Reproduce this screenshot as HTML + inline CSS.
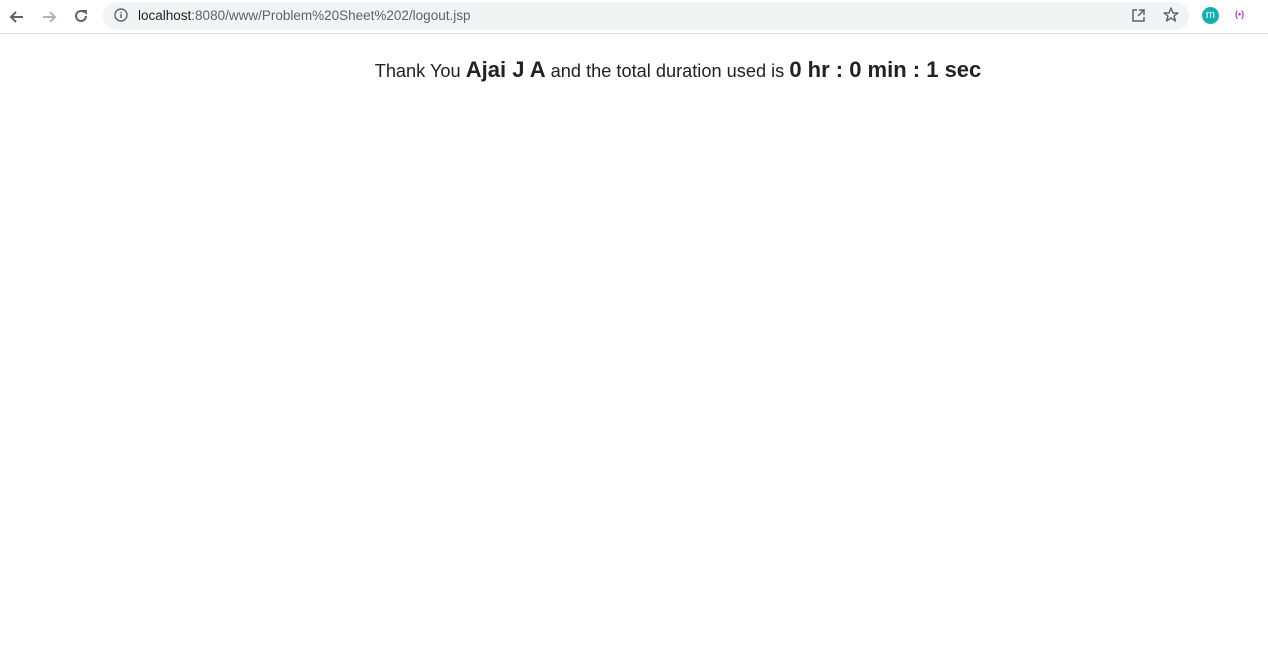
<!DOCTYPE html>
<html><head><style>
body{margin:0;width:1268px;height:668px;background:#fff;font-family:"Liberation Sans",sans-serif;overflow:hidden;position:relative}
.bar{position:absolute;left:0;top:0;width:1268px;height:33px;background:#fff;border-bottom:1px solid #dadce0}
.url{position:absolute;left:103px;top:2px;width:1086px;height:28px;border-radius:14px;background:#f1f3f4}
.urltext{position:absolute;left:138px;top:8px;font-size:13.5px;color:#202124}
.urltext span{color:#5f6368}
.msg{position:absolute;top:57px;left:0;width:1356px;text-align:center;font-size:18.2px;color:#222;white-space:nowrap}
.msg b{font-size:22px}
</style></head><body>
<div class="bar">
<svg style="position:absolute;left:8px;top:8px" width="18" height="18" viewBox="0 0 18 18"><path d="M15 9H3M8 4L3 9l5 5" stroke="#5f6368" stroke-width="2" fill="none"/></svg>
<svg style="position:absolute;left:40px;top:8px" width="18" height="18" viewBox="0 0 18 18"><path d="M3 9h12M10 4l5 5-5 5" stroke="#b0b3b7" stroke-width="2" fill="none"/></svg>
<svg style="position:absolute;left:72px;top:7px" width="18" height="18" viewBox="0 0 18 18"><path d="M14 9a5 5 0 1 1-1.5-3.6" stroke="#5f6368" stroke-width="2" fill="none"/><path d="M10 3h5v5z" fill="#5f6368"/></svg>
<div class="url"></div>
<svg style="position:absolute;left:114px;top:8px" width="14" height="14" viewBox="0 0 14 14"><circle cx="7" cy="7" r="6" stroke="#5f6368" stroke-width="1.4" fill="none"/><path d="M7 6v4M7 4v1" stroke="#5f6368" stroke-width="1.5"/></svg>
<div class="urltext">localhost<span>:8080/www/Problem%20Sheet%202/logout.jsp</span></div>
<svg style="position:absolute;left:1131px;top:8px" width="15" height="15" viewBox="0 0 15 15"><path d="M6 2H2v11h11V9M8 2h5v5M13 2L7 8" stroke="#5f6368" stroke-width="1.5" fill="none"/></svg>
<svg style="position:absolute;left:1162px;top:6px" width="18" height="18" viewBox="0 0 18 18"><path d="M9 2l2 5h5l-4 3 1.5 5L9 12l-4.5 3L6 10 2 7h5z" stroke="#5f6368" stroke-width="1.4" fill="none" stroke-linejoin="round"/></svg>
<div style="position:absolute;left:1202px;top:7px;width:17px;height:17px;border-radius:50%;background:#12b0b0;color:#fff;font-size:11px;text-align:center;line-height:16px">m</div>
<div style="position:absolute;left:1235px;top:9px;font-size:9px;color:#b040d0;font-weight:bold">(•)</div>
</div>
<div class="msg">Thank You <b>Ajai J A</b> and the total duration used is <b>0 hr : 0 min : 1 sec</b></div>
</body></html>
